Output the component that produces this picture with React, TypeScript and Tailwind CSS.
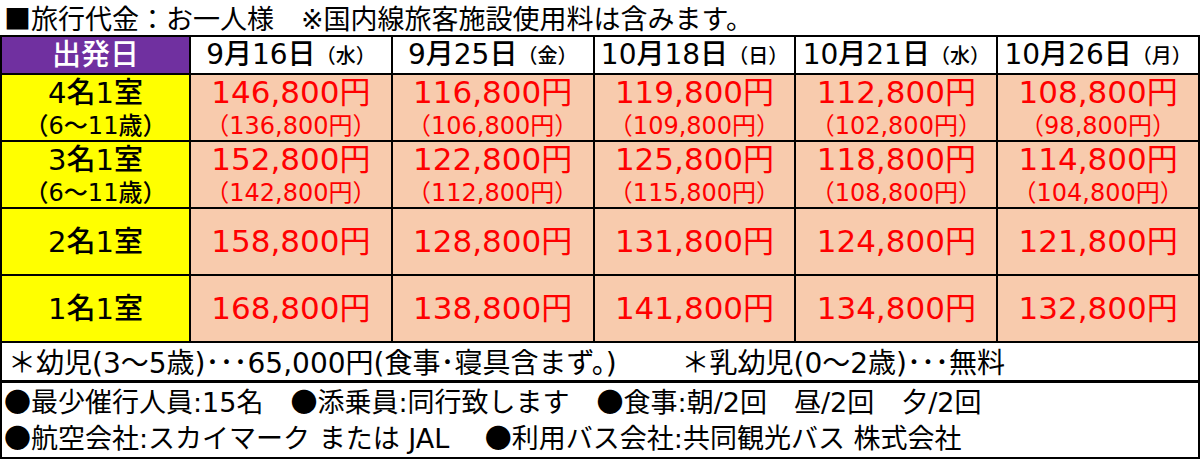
const dates = [
  { d: '9月16日', w: '水' },
  { d: '9月25日', w: '金' },
  { d: '10月18日', w: '日' },
  { d: '10月21日', w: '水' },
  { d: '10月26日', w: '月' },
];

const rows = [
  {
    label: '4名1室',
    sub: true,
    prices: ['146,800', '116,800', '119,800', '112,800', '108,800'],
    child: ['136,800', '106,800', '109,800', '102,800', '98,800'],
  },
  {
    label: '3名1室',
    sub: true,
    prices: ['152,800', '122,800', '125,800', '118,800', '114,800'],
    child: ['142,800', '112,800', '115,800', '108,800', '104,800'],
  },
  {
    label: '2名1室',
    sub: false,
    prices: ['158,800', '128,800', '131,800', '124,800', '121,800'],
    child: [],
  },
  {
    label: '1名1室',
    sub: false,
    prices: ['168,800', '138,800', '141,800', '134,800', '132,800'],
    child: [],
  },
];

// DejaVu carries the (wide) digits, the CJK font the rest
const J = ({ children }: { children: React.ReactNode }) => (
  <span className="font-['Noto_Sans_CJK_JP',sans-serif]">{children}</span>
);

export default function App() {
  return (
    <div className="w-[1200px] h-[459px] bg-white text-black overflow-hidden font-['DejaVu_Sans','Noto_Sans_CJK_JP',sans-serif]">
      <div className="h-[35px] pl-[4px] text-[27px] leading-[35px] whitespace-nowrap">
        <J>■</J>旅行代金<J>：</J>お一人様　※国内線旅客施設使用料は含みます。
      </div>

      <div className="grid grid-cols-[187px_repeat(5,1fr)] grid-rows-[36px_65px_65px_65px_65px] gap-[2px] bg-black border-2 border-black">
        <div className="bg-[#7030a0] text-white flex items-center justify-center text-[29px] leading-none font-medium">
          出発日
        </div>
        {dates.map((x) => (
          <div key={x.d} className="bg-white flex items-center justify-center font-medium">
            <span className="text-[28px] leading-none">{x.d}</span>
            <span className="text-[20px] leading-none font-['Noto_Sans_CJK_JP',sans-serif]">（{x.w}）</span>
          </div>
        ))}

        {rows.map((r) => (
          <>
            <div key={r.label} className="bg-[#ffff00] flex flex-col items-center justify-center font-medium">
              <span className="text-[29px] leading-[34px]">{r.label}</span>
              {r.sub && (
                <span className="text-[24px] leading-[28px]">
                  <J>（</J>6<J>～</J>11歳<J>）</J>
                </span>
              )}
            </div>
            {r.prices.map((p, i) => (
              <div
                key={r.label + i}
                className="bg-[#f8cbad] text-[#ff0000] flex flex-col items-center justify-center"
              >
                <span className="text-[31px] leading-[35px]">{p}円</span>
                {r.sub && (
                  <span className="text-[24px] leading-[28px]">
                    <J>（</J>{r.child[i]}円<J>）</J>
                  </span>
                )}
              </div>
            ))}
          </>
        ))}
      </div>

      <div className="h-[40px] border-x-2 border-b-[3px] border-black pl-[6px] text-[28px] leading-[37px] whitespace-nowrap">
        <J>＊</J>幼児(3<J>～</J>5歳)<J>･･･</J>65,000円(食事<J>･</J>寝具含まず。)　　 <J>＊</J>乳幼児(0<J>～</J>2歳)<J>･･･</J>無料
      </div>

      <div className="h-[76px] border-x-2 border-b-2 border-black pl-[2px] pt-[1px] text-[27px] leading-[34px] whitespace-nowrap">
        <div>
          <J>●</J>最少催行人員:15名　<J>●</J>添乗員:同行致します　<J>●</J>食事:朝/2回　昼/2回　夕/2回
        </div>
        <div>
          <J>●</J>航空会社:スカイマーク または JAL　 <J>●</J>利用バス会社:共同観光バス 株式会社
        </div>
      </div>
    </div>
  );
}
